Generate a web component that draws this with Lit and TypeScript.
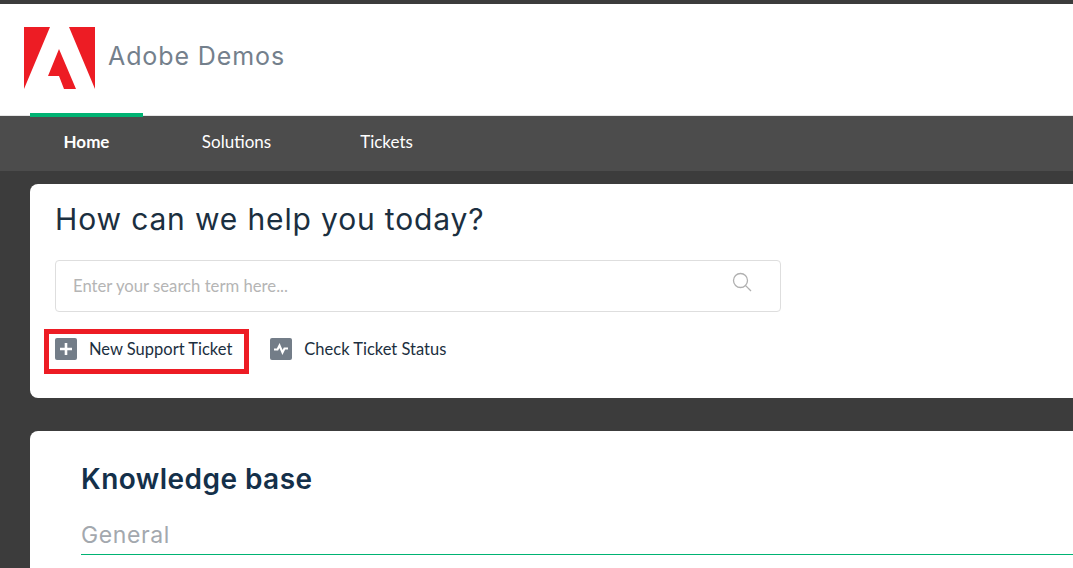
import { LitElement, css, html } from 'lit';
import { customElement } from 'lit/decorators.js';

@customElement('app-root')
export class AppRoot extends LitElement {
  render() {
    return html`
      <header class="brand">
        <svg class="logo" width="71" height="62" viewBox="0 0 71 62">
          <path fill="#ed1c24" d="M0 0H26L0 62ZM45 0H71V62ZM35 22L52 62H40L35 49H24Z" />
        </svg>
        <span class="brand-name">Adobe Demos</span>
      </header>
      <nav class="nav">
        <a class="tab active">Home</a>
        <a class="tab">Solutions</a>
        <a class="tab">Tickets</a>
      </nav>
      <main class="content">
        <section class="card help">
          <h1>How can we help you today?</h1>
          <div class="search">
            <span class="placeholder">Enter your search term here...</span>
            <svg class="search-icon" width="20" height="20" viewBox="0 0 20 20" fill="none" stroke="#b0b0b0" stroke-width="1.3">
              <circle cx="8.5" cy="8.5" r="7" />
              <path d="M13.6 13.6L19 19" />
            </svg>
          </div>
          <div class="actions">
            <a class="action marked">
              <span class="tile">
                <svg width="12" height="12" viewBox="0 0 12 12" stroke="#fff" stroke-width="2.6">
                  <path d="M6 0V12M0 6H12" />
                </svg>
              </span>
              New Support Ticket
            </a>
            <a class="action">
              <span class="tile">
                <svg width="14" height="12" viewBox="0 0 14 12" fill="none" stroke="#fff" stroke-width="2.1">
                  <path d="M0 6.5H3.5L5.5 2.5L8.5 9.5L10.5 5.5H14" />
                </svg>
              </span>
              Check Ticket Status
            </a>
          </div>
        </section>
        <section class="card kb">
          <h2>Knowledge base</h2>
          <h3>General</h3>
        </section>
      </main>
    `;
  }

  static styles = css`
    :host {
      display: block;
      height: 568px;
      overflow: hidden;
      background: #3c3c3c;
      border-top: 4px solid #3c3c3c;
      box-sizing: border-box;
      font-family: 'Lato', 'Open Sans', sans-serif;
    }
    .brand {
      display: flex;
      align-items: flex-start;
      height: 111px;
      box-sizing: border-box;
      padding: 23px 0 0 24px;
      background: #fff;
    }
    .logo {
      display: block;
    }
    .brand-name {
      margin: 13px 0 0 13px;
      font-family: 'Inter', sans-serif;
      font-size: 25px;
      letter-spacing: 0.9px;
      line-height: 32px;
      color: #74808c;
    }
    .nav {
      display: flex;
      height: 56px;
      padding-left: 30px;
      background: #4c4c4c;
      border-top: 1px solid #e6e6e6;
      box-sizing: border-box;
    }
    .tab {
      width: 113px;
      margin-right: 37px;
      padding-top: 1px;
      height: 55px;
      box-sizing: border-box;
      line-height: 50px;
      text-align: center;
      font-size: 17px;
      color: #fff;
    }
    .tab.active {
      font-weight: 700;
      border-top: 4px solid #00b373;
      margin-top: -3px;
      padding-top: 0;
    }
    .content {
      padding: 13px 0 0 30px;
    }
    .card {
      width: 1100px;
      background: #fff;
      border-radius: 8px;
      box-sizing: border-box;
    }
    .help {
      height: 214px;
      padding: 15px 0 0 25px;
    }
    h1 {
      margin: 0;
      font-family: 'Inter', sans-serif;
      font-size: 30px;
      letter-spacing: 0.85px;
      line-height: 40px;
      font-weight: 400;
      color: #1b2f40;
    }
    .search {
      display: flex;
      align-items: center;
      justify-content: space-between;
      width: 726px;
      height: 52px;
      margin-top: 21px;
      padding: 0 28px 0 17px;
      box-sizing: border-box;
      border: 1px solid #dedede;
      border-radius: 4px;
    }
    .search-icon {
      margin-bottom: 9px;
    }
    .placeholder {
      font-size: 16.7px;
      color: #b5b5b5;
    }
    .actions {
      display: flex;
      gap: 10px;
      margin: 17px 0 0 -11px;
    }
    .action {
      display: flex;
      align-items: center;
      gap: 12px;
      padding: 0 12px 5px 6px;
      height: 45px;
      border: 5px solid transparent;
      box-sizing: border-box;
      font-size: 16.5px;
      color: #1b2f40;
    }
    .action.marked {
      border-color: #ed1c24;
    }
    .tile {
      display: flex;
      align-items: center;
      justify-content: center;
      width: 22px;
      height: 22px;
      border-radius: 2px;
      background: #737d88;
    }
    .kb {
      height: 200px;
      margin-top: 33px;
      padding: 29px 0 0 51px;
    }
    h2 {
      margin: 0;
      font-family: 'Inter', sans-serif;
      font-size: 28px;
      letter-spacing: 0.45px;
      line-height: 38px;
      font-weight: 600;
      color: #14304a;
    }
    h3 {
      margin: 23px 0 0;
      padding-bottom: 5px;
      font-family: 'Inter', sans-serif;
      font-size: 23px;
      letter-spacing: 0.6px;
      line-height: 28px;
      font-weight: 400;
      color: #a3a8ae;
      border-bottom: 1px solid #00b373;
    }
  `;
}
